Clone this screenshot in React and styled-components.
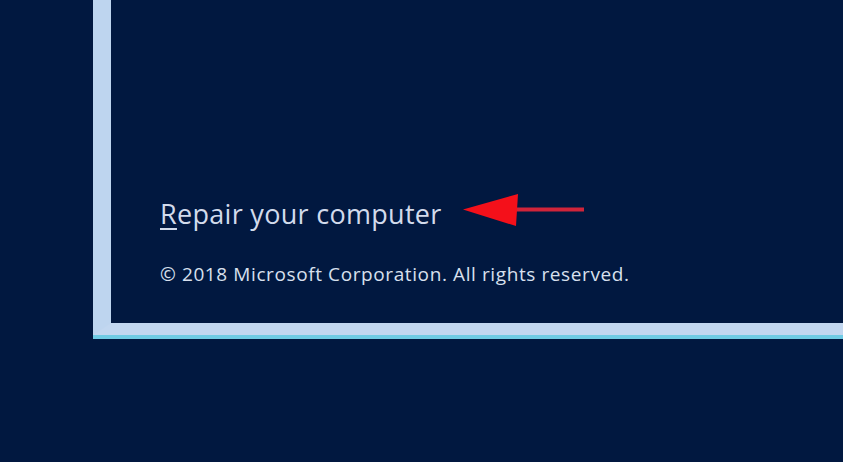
import React from "react";
import styled, { createGlobalStyle } from "styled-components";

const Global = createGlobalStyle`
  html, body { margin: 0; padding: 0; background: #011840; overflow: hidden; }
  #root { width: 843px; height: 462px; }
`;

const Screen = styled.div`
  width: 843px;
  height: 462px;
  background: #011840;
  overflow: hidden;
  font-family: "Open Sans", "Noto Sans", sans-serif;
`;

const Panel = styled.div`
  box-sizing: border-box;
  margin-left: 93px;
  width: 900px;
  height: 335px;
  background: #011840;
  border-left: 18px solid #bed5ef;
  border-bottom: 12px solid #c2d7f0;
  box-shadow: 0 4px 0 0 #6fcbe4;
  display: flex;
  flex-direction: column;
  justify-content: flex-end;
  padding: 0 0 37px 49px;
`;

const RepairRow = styled.div`
  display: flex;
  align-items: center;
  gap: 20px;
  margin-bottom: 30px;
  height: 36px;
`;

const Link = styled.span`
  color: #d2dbec;
  font-size: 27px;
  line-height: 36px;
  letter-spacing: 0.3px;
  u { text-decoration-thickness: 1.5px; text-underline-offset: 4px; }
`;

const Copy = styled.div`
  color: #d8e0ee;
  font-size: 19px;
  line-height: 24px;
  letter-spacing: 0.6px;
`;

const Arrow = () => (
  <svg width="124" height="36" viewBox="0 0 124 36" style={{ marginTop: -9 }}>
    <rect x="40" y="15.5" width="82" height="4" fill="#d0243a" />
    <polygon points="1,17.5 56,2 54,34" fill="#f4101a" />
  </svg>
);

export default function App() {
  return (
    <Screen>
      <Global />
      <Panel>
        <RepairRow>
          <Link><u>R</u>epair your computer</Link>
          <Arrow />
        </RepairRow>
        <Copy>© 2018 Microsoft Corporation. All rights reserved.</Copy>
      </Panel>
    </Screen>
  );
}
